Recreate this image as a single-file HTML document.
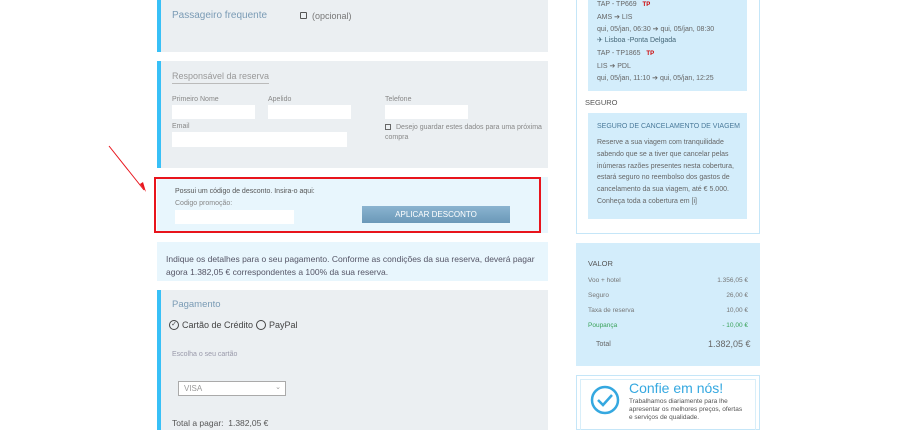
<!DOCTYPE html>
<html><head><meta charset="utf-8"><style>
*{margin:0;padding:0;box-sizing:border-box}
body{width:900px;height:430px;overflow:hidden;background:#fff;font-family:"Liberation Sans",sans-serif;position:relative;color:#555}
.a{position:absolute}
.panel{background:#ebeff2;border-left:4px solid #38c0f7}
.inp{position:absolute;background:#fff;height:14px}
.lbl{position:absolute;font-size:7px;color:#888}
.t{position:absolute;white-space:nowrap}
</style></head><body>
<div class="a panel" style="left:157px;top:0;width:391px;height:52px"></div>
<div class="t" style="left:172px;top:10px;font-size:10px;color:#7a9bb5">Passageiro frequente</div>
<div class="a" style="left:300px;top:12px;width:7px;height:7px;border:1px solid #555;border-radius:1px"></div>
<div class="t" style="left:312px;top:11px;font-size:9px;color:#777">(opcional)</div>

<div class="a panel" style="left:157px;top:61px;width:391px;height:107px"></div>
<div class="t" style="left:172px;top:71px;font-size:9px;color:#999;border-bottom:1px solid #bbb;padding-bottom:2px">Responsável da reserva</div>
<div class="lbl" style="left:172px;top:96px">Primeiro Nome</div>
<div class="lbl" style="left:268px;top:96px">Apelido</div>
<div class="lbl" style="left:385px;top:96px">Telefone</div>
<div class="inp" style="left:172px;top:105px;width:83px"></div>
<div class="inp" style="left:268px;top:105px;width:83px"></div>
<div class="inp" style="left:385px;top:105px;width:83px"></div>
<div class="lbl" style="left:172px;top:123px">Email</div>
<div class="inp" style="left:172px;top:132px;width:175px;height:15px"></div>
<div class="a" style="left:385px;top:124px;width:6px;height:6px;border:1px solid #666"></div>
<div class="lbl" style="left:396px;top:123px;width:150px;line-height:10px;white-space:normal">Desejo guardar estes dados para uma próxima</div>
<div class="lbl" style="left:385px;top:134px">compra</div>

<div class="a" style="left:157px;top:177px;width:391px;height:56px;background:#e8f6fd"></div>
<div class="a" style="left:154px;top:177px;width:387px;height:56px;border:2px solid #e8141c"></div>
<div class="t" style="left:175px;top:188px;font-size:7px;color:#555">Possui um código de desconto. Insira-o aqui:</div>
<div class="lbl" style="left:175px;top:200px">Codigo promoção:</div>
<div class="inp" style="left:175px;top:210px;width:119px"></div>
<div class="a" style="left:362px;top:206px;width:148px;height:17px;background:linear-gradient(#8bb4d0,#6a98b8);color:#fff;font-size:8px;text-align:center;line-height:17px">APLICAR DESCONTO</div>

<div class="a" style="left:157px;top:242px;width:391px;height:39px;background:#e8f6fd"></div>
<div class="t" style="left:166px;top:253px;font-size:8.5px;color:#556;line-height:13px">Indique os detalhes para o seu pagamento. Conforme as condições da sua reserva, deverá pagar<br>agora 1.382,05 € correspondentes a 100% da sua reserva.</div>

<div class="a panel" style="left:157px;top:290px;width:391px;height:140px"></div>
<div class="t" style="left:172px;top:299px;font-size:9.5px;color:#7a9bb5">Pagamento</div>
<div class="a" style="left:169px;top:320px;width:10px;height:10px;border:1px solid #444;border-radius:50%;font-size:7px;line-height:8px;text-align:center;color:#444">✓</div>
<div class="t" style="left:182px;top:320px;font-size:9px;color:#444">Cartão de Crédito</div>
<div class="a" style="left:256px;top:320px;width:10px;height:10px;border:1px solid #444;border-radius:50%"></div>
<div class="t" style="left:269px;top:320px;font-size:9px;color:#444">PayPal</div>
<div class="lbl" style="left:172px;top:351px;color:#99a">Escolha o seu cartão</div>
<div class="a" style="left:178px;top:381px;width:108px;height:15px;background:#fff;border:1px solid #aaa;font-size:8px;color:#999;padding:2px 5px">VISA<span style="position:absolute;right:4px;top:1px;font-size:7px">⌄</span></div>
<div class="t" style="left:172px;top:418px;font-size:8.5px;color:#555">Total a pagar: &nbsp;1.382,05 €</div>

<svg class="a" style="left:100px;top:140px" width="60" height="60"><line x1="9" y1="6" x2="44" y2="50" stroke="#e8141c" stroke-width="1"/><path d="M40 44 L46 52 L43 42 Z" fill="#e8141c"/></svg>

<div class="a" style="left:576px;top:0;width:184px;height:234px;border:1px solid #c5e6f8;border-top:none"></div>
<div class="a" style="left:588px;top:0;width:159px;height:91px;background:#d3edfb"></div>
<div class="t" style="left:597px;top:-1px;font-size:7px;color:#666;line-height:11.8px">TAP - TP669 &nbsp;&nbsp;<span style="color:#c00;font-weight:bold;font-size:6px">TP</span><br>AMS ➔ LIS<br>qui, 05/jan, 06:30 ➔ qui, 05/jan, 08:30<br><span style="color:#467">✈ Lisboa -Ponta Delgada</span></div>
<div class="t" style="left:597px;top:48px;font-size:7px;color:#666;line-height:12.5px">TAP - TP1865 &nbsp; <span style="color:#c00;font-weight:bold;font-size:6px">TP</span><br>LIS ➔ PDL<br>qui, 05/jan, 11:10 ➔ qui, 05/jan, 12:25</div>
<div class="t" style="left:585px;top:98px;font-size:7.5px;color:#555">SEGURO</div>
<div class="a" style="left:588px;top:113px;width:159px;height:106px;background:#d3edfb"></div>
<div class="t" style="left:597px;top:123px;font-size:7px;color:#4a7a9a">SEGURO DE CANCELAMENTO DE VIAGEM</div>
<div class="a" style="left:597px;top:137px;width:148px;font-size:7px;color:#666;line-height:11.8px">Reserve a sua viagem com tranquilidade sabendo que se a tiver que cancelar pelas inúmeras razões presentes nesta cobertura, estará seguro no reembolso dos gastos de cancelamento da sua viagem, até € 5.000. Conheça toda a cobertura em [i]</div>

<div class="a" style="left:576px;top:243px;width:184px;height:123px;background:#d3edfb"></div>
<div class="t" style="left:588px;top:259px;font-size:7.5px;color:#555">VALOR</div>
<div class="a" style="left:588px;top:273px;width:160px;font-size:6.5px;color:#777;line-height:15px">
<div>Voo + hotel<span style="float:right">1.356,05 €</span></div>
<div>Seguro<span style="float:right">26,00 €</span></div>
<div>Taxa de reserva<span style="float:right">10,00 €</span></div>
<div style="color:#3aa25a">Poupança<span style="float:right">- 10,00 €</span></div>
</div>
<div class="t" style="left:596px;top:341px;font-size:7px;color:#666">Total</div>
<div class="t" style="left:708px;top:339px;font-size:9px;color:#666">1.382,05 €</div>

<div class="a" style="left:576px;top:375px;width:184px;height:55px;border:1px solid #c5e6f8"></div>
<div class="a" style="left:580px;top:379px;width:176px;height:51px;border:1px solid #d8eef9;border-bottom:none"></div>
<svg class="a" style="left:590px;top:385px" width="30" height="30"><circle cx="15" cy="15" r="13" fill="none" stroke="#35a8e0" stroke-width="2.5"/><path d="M8 15 L13 20 L22 10" fill="none" stroke="#35a8e0" stroke-width="2.5"/></svg>
<div class="t" style="left:629px;top:380px;font-size:14px;color:#35a8e0">Confie em nós!</div>
<div class="t" style="left:629px;top:398px;font-size:6.5px;color:#555;line-height:8px">Trabalhamos diariamente para lhe<br>apresentar os melhores preços, ofertas<br>e serviços de qualidade.</div>
</body></html>
